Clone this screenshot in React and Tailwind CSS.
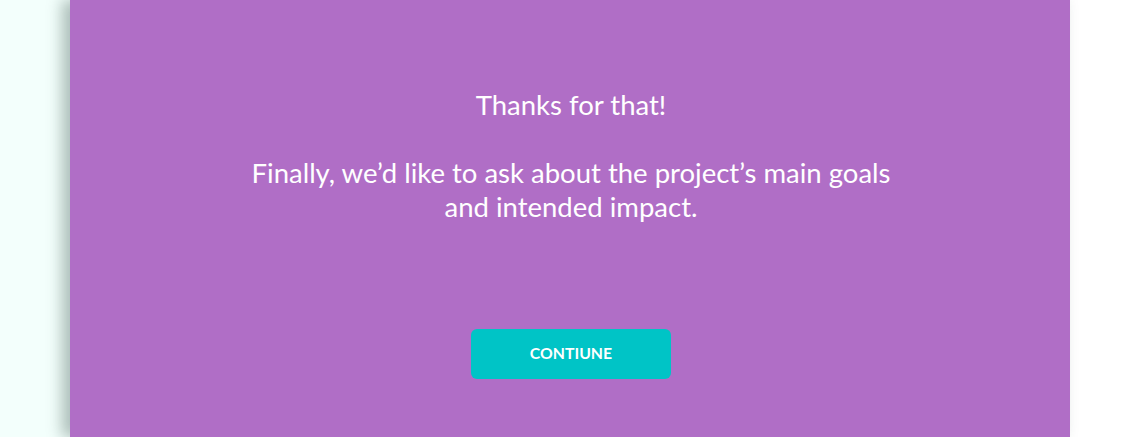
export default function App() {
  return (
    <div className="flex h-[437px] w-[1145px] overflow-hidden bg-white" style={{ fontFamily: "Lato, 'Noto Sans', sans-serif" }}>
      <div className="w-[70px] shrink-0 bg-[#f3fffc]" />
      <div className="relative flex w-[1000px] shrink-0 flex-col items-center bg-[#b06ec6] pl-[2px] shadow-[-8px_0_14px_rgba(40,70,60,0.35)]">
        <div className="mt-[88px] text-center text-[27.5px] leading-[34px] text-white">
          <p>Thanks for that!</p>
          <p className="mt-[34px]">Finally, we’d like to ask about the project’s main goals<br />and intended impact.</p>
        </div>
        <button className="mt-[105px] flex h-[50px] w-[200px] items-center justify-center rounded-[6px] bg-[#00c4c6] pb-[3px] text-[15.8px] font-bold text-white">
          CONTIUNE
        </button>
      </div>
      <div className="flex-1 bg-white" />
    </div>
  );
}
